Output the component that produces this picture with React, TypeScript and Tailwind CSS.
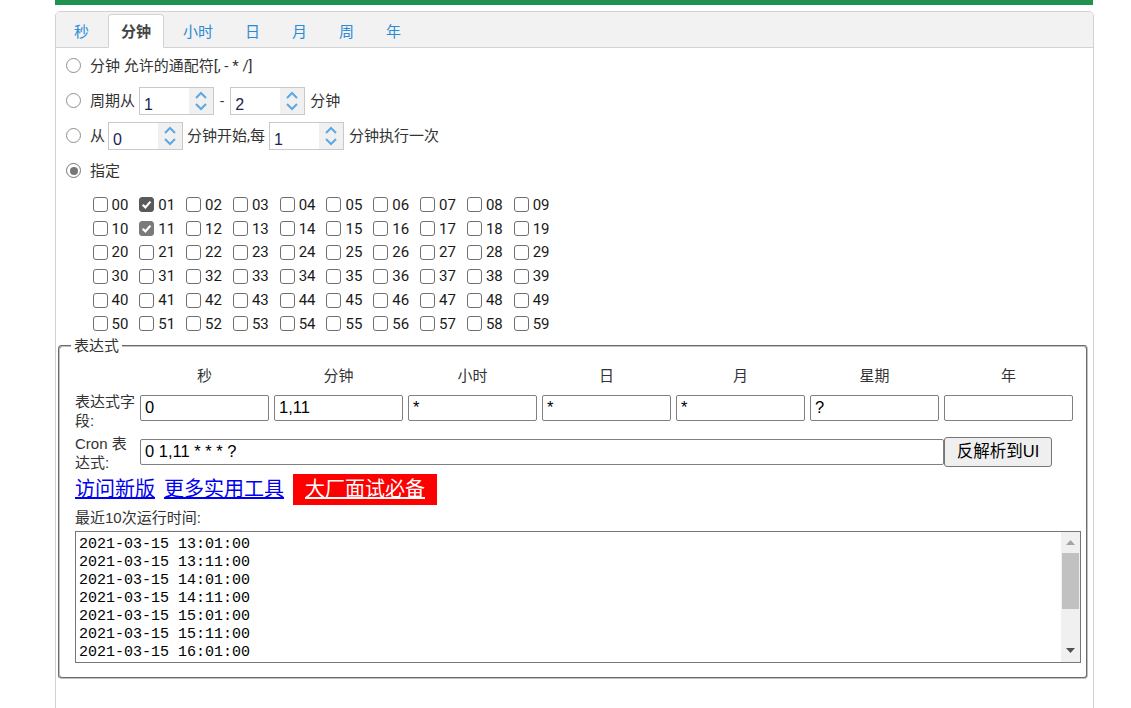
import React from 'react';

const tabs = ['秒', '分钟', '小时', '日', '月', '周', '年'];
const heads = ['秒', '分钟', '小时', '日', '月', '星期', '年'];
const fields = ['0', '1,11', '*', '*', '*', '?', ''];
const checked: Record<number, string> = { 1: 'bg-[#5a5a5a] border-[#5a5a5a]', 11: 'bg-[#7a7a7a] border-[#7a7a7a]' };
const times = [
  '2021-03-15 13:01:00',
  '2021-03-15 13:11:00',
  '2021-03-15 14:01:00',
  '2021-03-15 14:11:00',
  '2021-03-15 15:01:00',
  '2021-03-15 15:11:00',
  '2021-03-15 16:01:00',
  '2021-03-15 16:11:00',
  '2021-03-15 17:01:00',
  '2021-03-15 17:11:00',
];

function Radio({ on }: { on?: boolean }) {
  return (
    <span
      className={
        on
          ? 'flex h-[15px] w-[15px] shrink-0 items-center justify-center rounded-full border border-[#767676] bg-white'
          : 'flex h-[15px] w-[15px] shrink-0 items-center justify-center rounded-full border border-[#8f8f8f] bg-white'
      }
    >
      {on && <span className="h-[8px] w-[8px] rounded-full bg-[#767676]" />}
    </span>
  );
}

function Spinner({ value, className = '' }: { value: string; className?: string }) {
  return (
    <span className={`flex h-[28px] w-[75px] shrink-0 border border-[#c9c9c9] bg-white ${className}`}>
      <span className="flex-1 pl-[4px] pt-[8px] font-['Liberation_Sans',sans-serif] text-[16px] leading-[18px] text-[#1b2456]">
        {value}
      </span>
      <span className="flex w-[24px] flex-col items-center justify-center gap-[4px] bg-[#f0f0f0]">
        <svg width="14" height="8" viewBox="0 0 14 8">
          <path d="M2 7 L7 2 L12 7" fill="none" stroke="#5aa9e4" strokeWidth="2" />
        </svg>
        <svg width="14" height="8" viewBox="0 0 14 8">
          <path d="M2 1 L7 6 L12 1" fill="none" stroke="#5aa9e4" strokeWidth="2" />
        </svg>
      </span>
    </span>
  );
}

export default function App() {
  return (
    <div className="h-[708px] w-[1131px] overflow-hidden bg-white font-['Roboto','Noto_Sans_CJK_SC',sans-serif] text-[15px] text-[#333]">
      <div className="ml-[55px] h-[5px] w-[1038px] bg-[#21914f]" />
      <div className="ml-[55px] mt-[6px] h-[700px] w-[1039px] rounded-t-[5px] border border-[#d2d2d2]">
        {/* tab header */}
        <div className="flex h-[36px] items-end gap-[6px] rounded-t-[4px] border-b border-[#d2d2d2] bg-[#f2f2f2] pl-[5px]">
          {tabs.map((t) =>
            t === '分钟' ? (
              <div
                key={t}
                className="-mb-px flex h-[34px] items-center rounded-t-[4px] border border-[#d2d2d2] border-b-white bg-white px-[12px] pt-[2px] font-bold leading-[20px] text-[#444]"
              >
                {t}
              </div>
            ) : (
              <div
                key={t}
                className="-mb-px flex h-[34px] items-center border border-transparent px-[12px] pt-[2px] leading-[20px] text-[#2b8bd5]"
              >
                {t}
              </div>
            )
          )}
        </div>

        {/* body */}
        <div className="pl-[2px]">
          <div className="flex h-[35px] items-center pl-[8px] leading-[20px]">
            <Radio />
            <span className="ml-[9px]">分钟 允许的通配符[, - * /]</span>
          </div>
          <div className="flex h-[35px] items-center pl-[8px] leading-[20px]">
            <Radio />
            <span className="ml-[9px]">周期从</span>
            <Spinner value="1" className="ml-[4px]" />
            <span className="mx-[6px]">-</span>
            <Spinner value="2" />
            <span className="ml-[5px]">分钟</span>
          </div>
          <div className="flex h-[35px] items-center pl-[8px] leading-[20px]">
            <Radio />
            <span className="ml-[9px]">从</span>
            <Spinner value="0" className="ml-[3px]" />
            <span className="mx-[4px]">分钟开始,每</span>
            <Spinner value="1" />
            <span className="ml-[5px]">分钟执行一次</span>
          </div>
          <div className="flex h-[35px] items-center pl-[8px] leading-[20px]">
            <Radio on />
            <span className="ml-[9px]">指定</span>
          </div>

          <div className="ml-[34.5px] mt-[5px] grid grid-cols-[repeat(10,46.8px)] text-[#1a1a1a]">
            {Array.from({ length: 60 }, (_, i) => (
              <div key={i} className="flex h-[23.8px] items-center leading-[20px]">
                {checked[i] ? (
                  <span className={`flex h-[15px] w-[15px] items-center justify-center rounded-[3px] border ${checked[i]}`}>
                    <svg width="11" height="11" viewBox="0 0 10 10">
                      <path d="M1.5 5.2 L4 7.6 L8.6 2.4" fill="none" stroke="white" strokeWidth="2" />
                    </svg>
                  </span>
                ) : (
                  <span className="h-[15px] w-[15px] rounded-[3px] border border-[#6f6f6f] bg-white" />
                )}
                <span className="ml-[4px]">{String(i).padStart(2, '0')}</span>
              </div>
            ))}
          </div>

          {/* expression fieldset */}
          <fieldset className="w-[1030px] rounded-[4px] border-2 border-[#c0c0c0] pb-[14px] pl-[11px] pr-[5px] font-['Liberation_Sans','Noto_Sans_CJK_SC',sans-serif] [border-style:groove]">
            <legend className="px-[3px] font-['Roboto','Noto_Sans_CJK_SC',sans-serif] leading-[20px]">表达式</legend>
            <div className="ml-[4px]">
              <div className="mt-[10px] flex h-[20px] gap-[5px] pl-[65px] leading-[20px]">
                {heads.map((h) => (
                  <div key={h} className="w-[129px] text-center">
                    {h}
                  </div>
                ))}
              </div>

              <div className="mt-[6px] flex items-start">
                <div className="w-[65px] leading-[19px]">表达式字段:</div>
                <div className="mt-[3px] flex gap-[5px]">
                  {fields.map((f, i) => (
                    <input
                      key={i}
                      readOnly
                      defaultValue={f}
                      className="h-[26px] w-[129px] rounded-[2px] border border-[#808080] px-[4px] text-[16.5px] text-black outline-none"
                    />
                  ))}
                </div>
              </div>

              <div className="mt-[4.5px] flex items-start">
                <div className="w-[65px] leading-[19px]">Cron 表达式:</div>
                <input
                  readOnly
                  defaultValue="0 1,11 * * * ?"
                  className="mt-[4.5px] h-[26px] w-[804px] rounded-[2px] border border-[#808080] px-[4px] text-[16.5px] text-black outline-none"
                />
                <button className="mt-[2.5px] h-[30px] w-[108px] rounded-[3px] border border-[#767676] bg-[#efefef] text-[16.5px] text-black">
                  反解析到UI
                </button>
              </div>

              <div className="mt-[1.5px] flex h-[31px] items-center text-[20px] leading-[31px]">
                <a href="#" className="text-[#0000ee] underline">访问新版</a>
                <a href="#" className="ml-[9px] text-[#0000ee] underline">更多实用工具</a>
                <a href="#" className="ml-[9px] bg-[#ff0000] px-[12px] text-white underline">大厂面试必备</a>
              </div>

              <div className="mt-[4px] leading-[18px]">最近10次运行时间:</div>

              <div className="mt-[4px] flex h-[132px] w-[1006px] border border-[#767676] bg-white">
                <div className="flex-1 overflow-y-auto pl-[3px] pt-[4px] font-['Liberation_Mono',monospace] text-[15px] leading-[18px] text-black [scrollbar-width:none]">
                  {times.map((t) => (
                    <div key={t}>{t}</div>
                  ))}
                </div>
                <div className="flex w-[19px] flex-col bg-[#f0f0f0]">
                  <div className="flex h-[21px] items-center justify-center">
                    <svg width="9" height="5" viewBox="0 0 9 5">
                      <path d="M0 5 L4.5 0 L9 5Z" fill="#a3a3a3" />
                    </svg>
                  </div>
                  <div className="ml-[1px] h-[56px] w-[17px] bg-[#c1c1c1]" />
                  <div className="flex-1" />
                  <div className="flex h-[22px] items-center justify-center">
                    <svg width="9" height="5" viewBox="0 0 9 5">
                      <path d="M0 0 L9 0 L4.5 5Z" fill="#505050" />
                    </svg>
                  </div>
                </div>
              </div>
            </div>
          </fieldset>
        </div>
      </div>
    </div>
  );
}
